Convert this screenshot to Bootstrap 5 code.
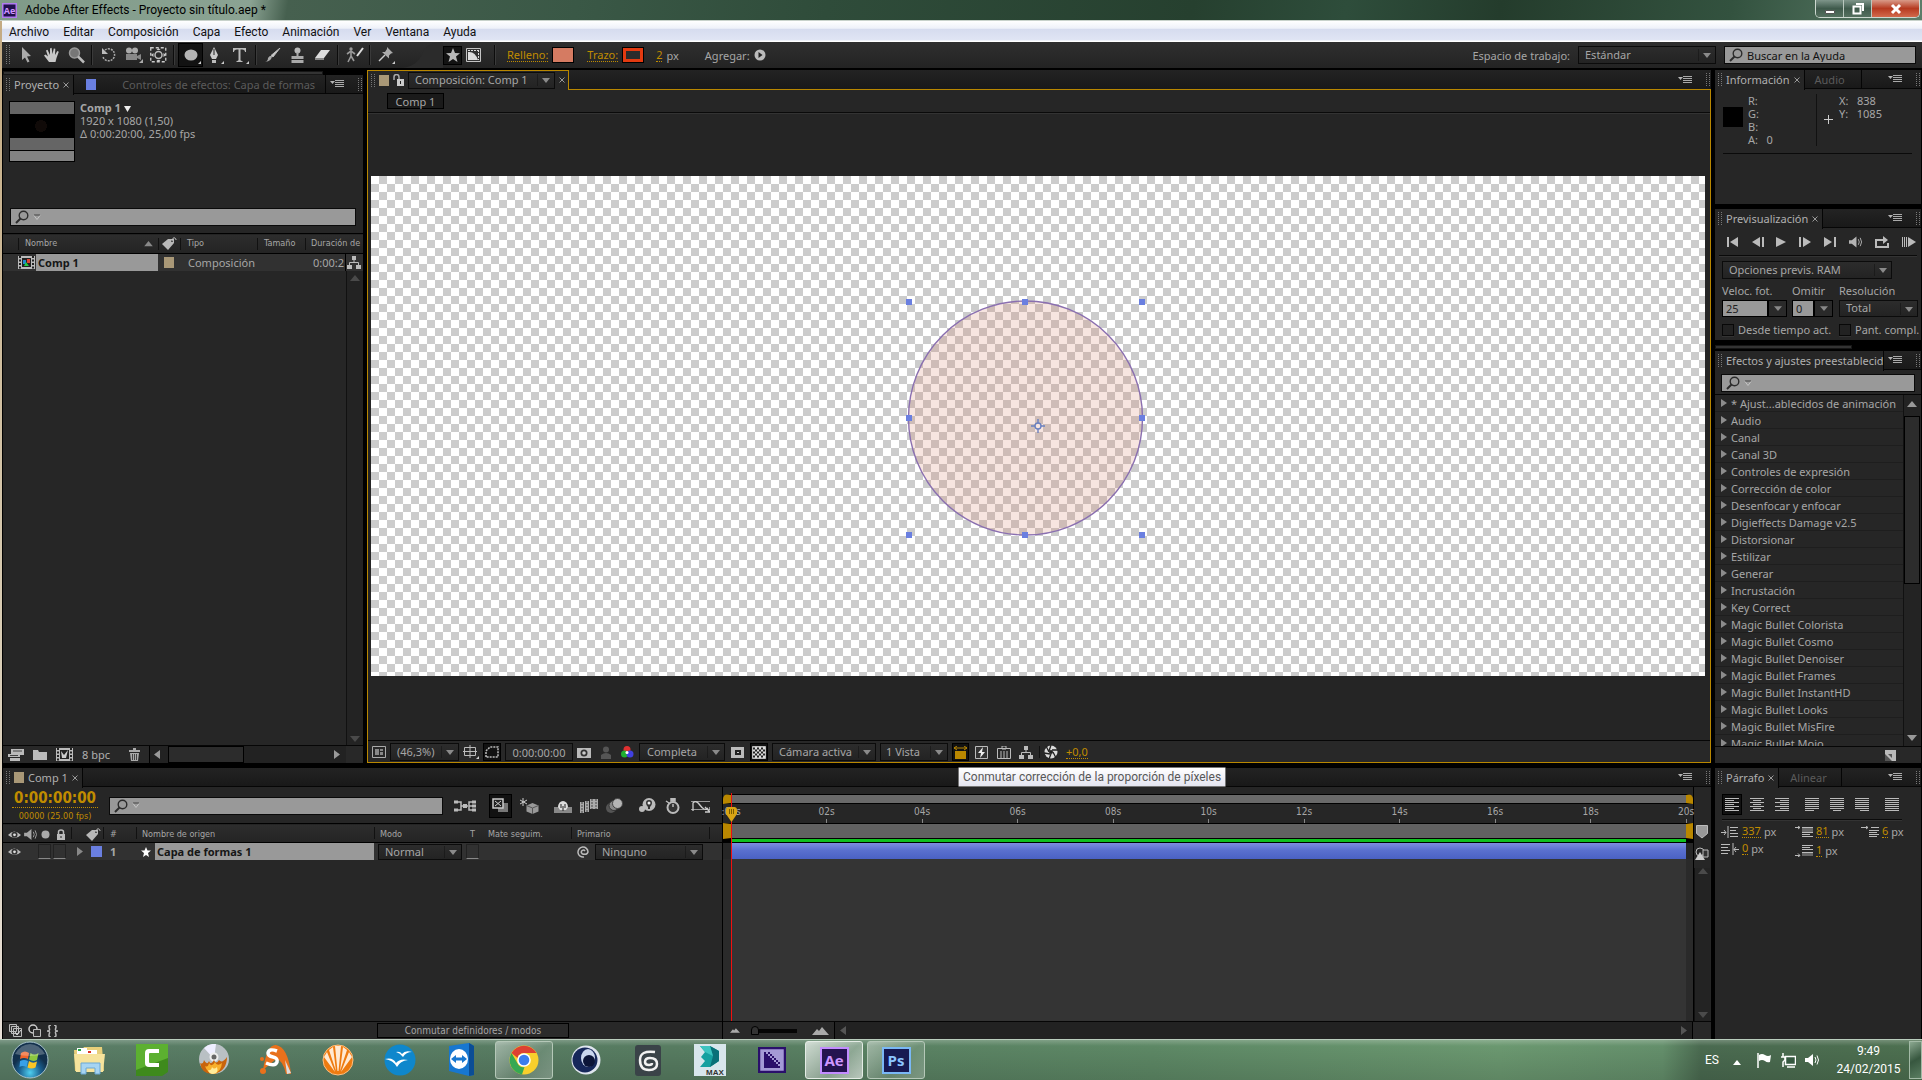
<!DOCTYPE html>
<html lang="es">
<head>
<meta charset="utf-8">
<meta name="viewport" content="width=device-width, initial-scale=1">
<title>Adobe After Effects - Proyecto sin título.aep *</title>
<link href="https://cdn.jsdelivr.net/npm/bootstrap@5.3.0/dist/css/bootstrap.min.css" rel="stylesheet">
<style>
:root{--ink:#a6a6a6;--pane:#262626;--gold:#c08c00;--field:#999}
body{height:100vh;overflow:hidden;background:#000;color:var(--ink);font:11px/13px "Noto Sans","Open Sans",sans-serif}
svg{display:block;flex:none}
button,input,select{font:inherit;color:inherit}
.ib{background:none;border:0;padding:0;display:inline-flex;align-items:center;justify-content:center;flex:none;color:#b4b4b4}
.ib.pressed{background:#121212;box-shadow:inset 0 0 0 1px #000}
.tiny{font:9px/13px "DejaVu Sans Condensed","DejaVu Sans",sans-serif}
/* window frame */
.titlebar{height:21px;background:linear-gradient(100deg,#7f9a88 0,#8ba393 13%,#46604f 15%,#3a5846 30%,#2f4c3a 43%,#26402f 62%,#2e4d3b 70%,#243c2c 78%,#33523f 90%,#5c7d69 100%);border-bottom:1px solid #c8d2cb;color:#000;font:12px/18px Roboto,sans-serif;padding-left:2px}
.wbtns{height:18px;border:1px solid #cdd8d0;border-top:0;border-radius:0 0 5px 5px;overflow:hidden;margin-right:2px}
.wbtns button{height:17px;width:28px;background:linear-gradient(#7e958a,#3f5a4c 50%,#55705f);border-right:1px solid #b9c7be}
.wbtns button:last-child{width:47px;background:linear-gradient(#d99a88,#b63a20 50%,#d2694c);border:0}
.frame{padding-left:2px;min-height:0;background:linear-gradient(#c4ab83,#d8ccb4 60%,#e8e0d8)}
.menubar{height:21px;background:linear-gradient(#fff 0,#eef1f9 35%,#d6dcef 38%,#e0e5f4 90%,#fff 96%);color:#111;font:12px/18px Roboto,sans-serif;padding-left:7px;gap:14px}
.menubar a{color:inherit;text-decoration:none}
.tools{height:26px;background:linear-gradient(#2f2f2f,#232323);padding-right:6px}
.tools .ib{width:25px;height:24px}
.tools .ib.small-b{width:19px;height:19px}
.vsep{width:7px;height:20px;flex:none;background:linear-gradient(90deg,transparent 2px,#0c0c0c 2px,#0c0c0c 3px,#3a3a3a 3px,#3a3a3a 4px,transparent 4px)}
.vline{width:1px;flex:none;align-self:stretch;background:#111;margin:4px 0}
.grip{width:4px;height:13px;flex:none;background:repeating-linear-gradient(#777 0 1px,transparent 1px 2px);-webkit-mask:linear-gradient(90deg,#000 1px,transparent 1px 3px,#000 3px);mask:linear-gradient(90deg,#000 1px,transparent 1px 3px,#000 3px)}
.gold{color:var(--gold);border-bottom:1px dotted var(--gold);text-decoration:none;line-height:12px}
.gold:hover{color:var(--gold)}
.clock{font:700 15px/17px "DejaVu Sans Condensed","DejaVu Sans",sans-serif;display:block}
.swatch{width:22px;height:16px;border:1px solid #000;background:#d57b62;flex:none}
.swatch.line{background:#2c2c2c;border:0;box-shadow:inset 0 0 0 1px #000,inset 0 0 0 4px #e43a10}
/* fields */
.sel{appearance:none;border:1px solid #0b0b0b;border-radius:0;height:18px;line-height:14px;padding:0 18px 1px 6px;color:var(--ink);background:url("data:image/svg+xml,%3Csvg xmlns='http://www.w3.org/2000/svg' width='17' height='14'%3E%3Cpath d='M0 1v12' stroke='%23101010'/%3E%3Cpath d='M5 5h8l-4 5z' fill='%238a8a8a'/%3E%3C/svg%3E") right center no-repeat,linear-gradient(#2c2c2c,#232323);flex:none}
.find{background:var(--field);border:1px solid #0a0a0a;height:18px;color:#222;flex:none}
.find input{background:none;border:0;outline:0;padding:0;min-width:0;flex:1;color:#111}
.find input::placeholder{color:#111;opacity:1}
.num{background:var(--field);border:1px solid #000;height:17px;padding:0 3px;color:#222}
.drop{width:19px;height:17px;background:#2a2a2a;border:1px solid #000}
.tick{appearance:none;width:12px;height:12px;margin:0 4px 0 0;background:#222;border:1px solid #080808;box-shadow:0 1px #333}
/* panels */
.pane{background:var(--pane);display:flex;flex-direction:column;min-width:0;min-height:0;position:relative}
.ptabs{height:19px;flex:none;display:flex;background:linear-gradient(#232323,#191919);border-bottom:1px solid #060606}
.ptab{height:20px;display:flex;align-items:center;background:var(--pane);border:0;border-right:1px solid #050505;padding:0 4px 1px 3px;gap:4px;white-space:nowrap;overflow:hidden;color:#b0b0b0}
.ptab.off{background:none;color:#5b5b5b;height:19px;padding-bottom:0}
.pend{width:37px;display:flex;align-items:center;margin-left:auto;flex:none}
.pend .ib{width:22px}
.pend .grip{margin-left:10px}
.strip{height:4px;background:#333;border:1px solid #161616;flex:none}
.chip{width:10px;height:11px;background:#a99877;flex:none}
.chip.blue{background:#6a7fe0}
.hr1{height:2px;background:#0a0a0a;border-bottom:1px solid #333;flex:none}
.left{width:360px}
.right{width:206px}
.thumb{width:66px;height:61px;flex:none;border:1px solid #000;background:radial-gradient(circle at 31px 24px,#100a08 6px,transparent 6px),linear-gradient(#656565 12px,#000 12px 36px,#656565 36px 48px,#000 48px 49px,#828282 49px)}
.grid-t{table-layout:fixed;border-collapse:collapse;width:100%;color:inherit}
.grid-t th,.grid-t td{padding:0;font-weight:400;white-space:nowrap;overflow:hidden;vertical-align:middle}
.grid-t thead tr{height:20px;background:linear-gradient(#2d2d2d,#242424);border-top:1px solid #000;border-bottom:1px solid #000}
.layers thead tr{height:19px}
.layers thead th{padding-top:3px}
.grid-t thead th.b{background:linear-gradient(#111,#111) left center/1px 12px no-repeat;padding-left:7px}
.grid-t tbody tr{height:17px;background:#313131}
.picked{background:var(--field);color:#161616;font-weight:700;line-height:17px;padding-left:2px}
.slotbox{width:13px;height:15px;border:1px solid #222;border-bottom-color:#888}
.sbar{width:17px;background:#232323;border-left:1px solid #111;display:flex;flex-direction:column;align-items:center;justify-content:space-between;flex:none;color:#4a4a4a;padding:2px 0}
.foot{height:22px;flex:none;display:flex;align-items:center;background:#282828;border-top:1px solid #060606;color:#b0b0b0}
/* composition viewer */
.viewer{border:1px solid #b98700;border-top:0}
.viewer>.ptabs{border-bottom:1px solid #b98700;height:20px;margin:0 -1px;padding-left:1px}
.viewer .ptab{border:1px solid #b98700;border-bottom:0;width:202px;margin-left:-1px;height:20px}
.stage{padding:62px 5px 64px 3px;background:#252525}
.viewer>.foot{padding:1px 0 0 4px;gap:4px}
.checker{background:conic-gradient(#ccc 25%,#fff 0 50%,#ccc 0 75%,#fff 0) 0 0/16px 16px;position:relative}
.shape{position:absolute;left:50%;top:50%;margin:-140px 0 0 -150px}
.hint{position:absolute;left:956px;top:4px;height:20px;padding:2px 4px;background:linear-gradient(#fff,#e4e5f0);border:1px solid #767676;color:#575757;white-space:nowrap;z-index:5;border-radius:1px;font:12px/15px Roboto,sans-serif}
/* effects list */
.fx{list-style:none;margin:0;padding:0;overflow:hidden;flex:1 1 0;min-height:0}
.fx li{height:17px;display:flex;align-items:center;gap:4px;padding-left:6px;border-bottom:1px solid #1e1e1e;white-space:nowrap}
.fx li::before{content:"";border-left:6px solid #8c8c8c;border-top:4px solid transparent;border-bottom:4px solid transparent}
/* timeline */
.tl-left{width:720px;border-right:1px solid #000}
.nav-track{height:10px;background:#696969;border:1px solid #000;border-radius:5px 5px 0 0;border-left:8px solid #b98700;border-right:7px solid #b98700}
.ruler{height:19px;padding:1px 7px 0 8px;font:10px/14px "DejaVu Sans Condensed",sans-serif}
.ruler span{width:0;display:flex;flex-direction:column;align-items:center;white-space:nowrap;justify-content:space-between}
.ruler span::after{content:"";height:4px;width:1px;background:#888}
.work{height:16px;background:#616161;border:1px solid #000;border-left:8px solid #b98700;border-right:7px solid #b98700}
.lane{padding:0 7px 0 8px}
.cache{height:3px;background:#10c020}
.bar{height:16px;background:linear-gradient(#7d8ee0,#5a70cf 45%,#4a61c4)}
.playhead{position:absolute;left:2px;top:18px;bottom:0;width:14px}
.playhead::after{content:"";position:absolute;left:6px;top:-12px;bottom:0;width:1px;background:#f01010}
.playhead svg{position:relative;z-index:1}
.zoomer{appearance:none;width:46px;height:10px;background:linear-gradient(transparent 3px,#050505 3px 7px,transparent 7px);margin:0 11px}
.zoomer::-webkit-slider-thumb{appearance:none;width:8px;height:9px;background:#333;border:1px solid #000;border-radius:4px 4px 0 0}
/* paragraph */
.al{padding:7px 0 0 7px}
.al .ib{width:20px;height:21px}
.para{display:grid;grid-template-columns:74px 66px 60px;padding-left:6px}
.para>div{display:flex;align-items:center;gap:3px;height:17px;white-space:nowrap}
/* taskbar */
.taskbar{height:41px;flex:none;background:linear-gradient(rgba(255,255,255,.22),transparent 15%,rgba(0,0,0,.12)),linear-gradient(90deg,#5a7d66 0,#577c61 35%,#5d8865 60%,#6b9870 78%,#648f6b 86.5%,#4a6a50 88.5%,#4d7050 100%);border-top:1px solid #b9cdbd;color:#fff;font:12px/18px Roboto,sans-serif}
.slot{width:62px;height:40px}
.slot>span{width:58px;height:38px;display:flex;align-items:center;justify-content:center;border-radius:3px;border:1px solid transparent}
.slot.open>span{border-color:#b5c8b8;background:linear-gradient(135deg,rgba(255,255,255,.42),rgba(255,255,255,.12) 60%,rgba(255,255,255,.25))}
.slot.front>span{border-color:#e4ece5;background:linear-gradient(135deg,rgba(255,255,255,.7),rgba(255,255,255,.32) 60%,rgba(255,255,255,.6))}
.appsq{width:29px;height:27px;border:2px solid #c38dff;background:#25134f;color:#cf96ff;font:700 15px/23px "Open Sans",sans-serif;text-align:center}
.appsq.ps{border-color:#7ab8f5;background:#171a52;color:#8bc5ff}
.peek{width:13px;height:38px;border:1px solid #a3baa6;background:linear-gradient(150deg,#8ba890,#37573f 50%,#5a7d61)}
</style>
</head>
<body class="d-flex flex-column">

<svg width="0" height="0" class="position-absolute" aria-hidden="true">
<defs>
<symbol id="menu" viewBox="0 0 14 10"><path d="M0 2h5l-2.500 3z" fill="#b5b5b5"/><path d="M5 1.500h9M5 3.500h9M5 5.500h9M5 7.500h9" stroke="#aaa"/></symbol>
<symbol id="x" viewBox="0 0 6 6"><path d="M.5.5l5 5M5.500.5l-5 5" stroke="#999" fill="none"/></symbol>
<symbol id="loupe" viewBox="0 0 14 14"><circle cx="8.500" cy="5.500" r="4.300" fill="none" stroke="#2c2c2c" stroke-width="1.400"/><path d="M5.500 8.500L1 13" stroke="#2c2c2c" stroke-width="2"/></symbol>
<symbol id="hist" viewBox="0 0 8 7"><path d="M1 1h6" stroke="#444"/><path d="M1 1.500l3 4 3-4" stroke="#c4c4c4" fill="none"/></symbol>
<symbol id="up" viewBox="0 0 10 7"><path d="M0 6l5-6 5 6z" fill="currentColor"/></symbol>
<symbol id="down" viewBox="0 0 10 7"><path d="M0 0h10L5 6z" fill="currentColor"/></symbol>
<symbol id="lt" viewBox="0 0 6 9"><path d="M6 0v9L0 4.500z" fill="currentColor"/></symbol>
<symbol id="rt" viewBox="0 0 6 9"><path d="M0 0v9l6-4.500z" fill="currentColor"/></symbol>
<symbol id="tag" viewBox="0 0 15 13"><path d="M0 7l6-5 6 0 0 4-6 7z" fill="#b8b8b8"/><circle cx="10" cy="4" r="1" fill="#333"/><path d="M10 4c0-4 4-4 4-1" stroke="#ccc" fill="none"/></symbol>
<symbol id="tree" viewBox="0 0 14 13"><path d="M5 0h4v4H5zM0 9h5v4H0zM9 9h5v4H9z" fill="#bbb"/><path d="M7 4v3M2.500 9V6.500h9V9" stroke="#bbb" fill="none"/></symbol>
<symbol id="eye" viewBox="0 0 13 10"><path d="M0 5q6-7 13 0-6 6-13 0z" fill="#bcbcbc"/><circle cx="6.500" cy="4.800" r="3" fill="#333"/><circle cx="6.500" cy="4.800" r="1.400" fill="#ddd"/></symbol>
<symbol id="film" viewBox="0 0 17 13"><path d="M0 0h17v13H0z" fill="#bbb"/><path d="M4 2h9v9H4z" fill="#222"/><path d="M2 0v13M15 0v13" stroke="#222" stroke-width="2" stroke-dasharray="2 1.500"/></symbol>
<symbol id="spk" viewBox="0 0 15 12"><path d="M0 4h3l5-4v12L3 8H0z" fill="currentColor"/><path d="M10 3q2 3 0 6M12 1.500q3 4.500 0 9" stroke="currentColor" fill="none"/></symbol>
<symbol id="mtn" viewBox="0 0 17 8"><path d="M0 8l5-6 2 2 3-4 7 8z" fill="#aaa"/></symbol>
</defs>
</svg>

<header class="titlebar d-flex align-items-center flex-shrink-0">
  <svg width="15" height="15"><path fill="#21104d" stroke="#b07cf0" stroke-width="1.500" d="M.75.75h13.500v13.500H.75z"/><text x="7.500" y="11" font-family="Open Sans" font-weight="700" font-size="9" fill="#cf96ff" text-anchor="middle">Ae</text></svg>
  <span class="ms-1 ps-1 flex-grow-1">Adobe After Effects - Proyecto sin título.aep *</span>
  <div class="wbtns d-flex align-self-start">
    <button class="ib" aria-label="Minimizar"><svg width="12" height="12"><path d="M1.500 7.500h9v3h-9z" fill="#fff" stroke="#555"/></svg></button>
    <button class="ib" aria-label="Restaurar"><svg width="12" height="12"><path d="M4 1h7v7M1.500 3.500h7v7h-7z" fill="none" stroke="#fff" stroke-width="2"/></svg></button>
    <button class="ib" aria-label="Cerrar"><svg width="12" height="12"><path d="M2 2l8 8M10 2l-8 8" stroke="#fff" stroke-width="3"/></svg></button>
  </div>
</header>

<div class="frame d-flex flex-column flex-grow-1">
<nav class="menubar d-flex align-items-center flex-shrink-0">
  <a href="#">Archivo</a><a href="#">Editar</a><a href="#">Composición</a><a href="#">Capa</a><a href="#">Efecto</a><a href="#">Animación</a><a href="#">Ver</a><a href="#">Ventana</a><a href="#">Ayuda</a>
</nav>

<div class="tools d-flex align-items-center flex-shrink-0">
  <span class="grip mx-1" style="height:20px"></span>
  <button class="ib" aria-label="Selección"><svg width="12" height="16"><path d="M1 0l9 9-4 .5 2.500 5-2 1L4 10.500 1 13z" fill="#aaa"/></svg></button>
  <button class="ib" aria-label="Mano"><svg width="16" height="16"><path d="M5 15L0 8.500l1.500-1L4 9.500 2 3.500l1.500-.8L6 8V1.500l1.600-.8L8.500 7l1.300-5.500 1.500.2L11 8l2.300-4 1.500.7L12.500 11 11.500 15z" fill="#c8c8c8"/></svg></button>
  <button class="ib" aria-label="Zoom"><svg width="17" height="17"><circle cx="6.500" cy="6" r="5" fill="#777" stroke="#999" stroke-width="1.500"/><path d="M10 9.500l6 6" stroke="#bbb" stroke-width="2.500"/></svg></button>
  <span class="vsep"></span>
  <button class="ib" aria-label="Rotación"><svg width="16" height="16"><path d="M4 3a6 6 0 1 1-2 7" fill="none" stroke="#aaa" stroke-width="1.500" stroke-dasharray="2 1"/><path d="M1 1v6h6z" fill="#bbb"/></svg></button>
  <button class="ib" aria-label="Cámara"><svg width="18" height="16"><circle cx="4" cy="3.500" r="3" fill="#aaa"/><circle cx="10" cy="3.500" r="3" fill="#aaa"/><path d="M1 7h11v6H1zM12 9l4-2v6l-4-2z" fill="#888"/><path d="M18 16v-4l-4 4z" fill="#aaa"/></svg></button>
  <button class="ib" aria-label="Panorámica"><svg width="17" height="16"><path d="M.75.75h15v14H.75z" fill="none" stroke="#ccc" stroke-width="1.300" stroke-dasharray="3 2"/><circle cx="8.500" cy="8" r="3.500" fill="none" stroke="#bbb" stroke-width="1.500"/><path d="M8.500 1l2 2h-4zM8.500 15l2-2h-4zM1 8l2.500-2v4zM16 8l-2.500-2v4z" fill="#ccc"/></svg></button>
  <span class="vsep"></span>
  <button class="ib pressed" aria-label="Elipse"><svg width="22" height="20"><ellipse cx="11" cy="10" rx="6.500" ry="5.500" fill="#b5b5b5"/><path d="M21 19v-3l-3 3z" fill="#ccc"/></svg></button>
  <button class="ib" aria-label="Pluma"><svg width="18" height="17"><path d="M7 0l4 8-2 4H5L3 8z" fill="#ccc"/><path d="M7 2v6" stroke="#222"/><path d="M5 13h4v3H5z" fill="#bbb"/><path d="M17 17v-3l-3 3z" fill="#ccc"/></svg></button>
  <button class="ib" aria-label="Texto"><svg width="18" height="17"><path d="M1 1h13v4h-1q0-2.500-3-2.500H8.500V13q0 1 2 1v1H4.500v-1q2 0 2-1V2.500H5Q2 2.500 2 5H1z" fill="#bbb"/><path d="M17 17v-3l-3 3z" fill="#ccc"/></svg></button>
  <span class="vsep"></span>
  <button class="ib" aria-label="Pincel"><svg width="16" height="15"><path d="M15 0L8 9 6 7.500z" fill="#ccc" stroke="#bbb"/><path d="M7 8q0 5-7 6 3-1 3-4 2-3 4-2z" fill="#aaa"/></svg></button>
  <button class="ib" aria-label="Tampón de clonar"><svg width="15" height="16"><circle cx="7.500" cy="3.500" r="3" fill="#bbb"/><path d="M6.500 5h2v4h5v3h-12V9h5zM1.500 13h12v3h-12z" fill="#aaa"/></svg></button>
  <button class="ib" aria-label="Borrador"><svg width="17" height="12"><path d="M7 1h9l-6 8H1z" fill="#ddd"/><path d="M1 9h9v2H1z" fill="#888"/></svg></button>
  <span class="vsep"></span>
  <button class="ib" aria-label="Pincel de rotoscopia"><svg width="18" height="16"><circle cx="5" cy="2" r="1.700" fill="#999"/><path d="M5 4v5l-3 6M5 9l3 5M1 7l4-3 4 3" stroke="#999" stroke-width="1.600" fill="none"/><path d="M17 1l-6 8" stroke="#ddd" stroke-width="2"/></svg></button>
  <span class="vsep"></span>
  <button class="ib" aria-label="Posición libre"><svg width="18" height="17"><path d="M9 0l6 6-2 .5-2 2 0 3L4 5l3 0 2-3z" fill="#aaa"/><path d="M7 8l-6 6" stroke="#ccc" stroke-width="1.500"/><path d="M17 17v-3l-3 3z" fill="#ccc"/></svg></button>
  <svg width="44" height="26"><path d="M0 26Q18 26 24 10 28 0 44 0V26z" fill="#2b2b2b"/></svg>
  <button class="ib pressed small-b" aria-label="Crear forma"><svg width="14" height="14"><path d="M7 0l2 5 5 .3-4 3.300L11.500 14 7 11l-4.500 3L4 8.600 0 5.300 5 5z" fill="#b8b8b8"/></svg></button>
  <button class="ib small-b" style="width:22px" aria-label="Crear máscara"><svg width="15" height="14"><path d="M.5.5h14v13H.5z" fill="#333" stroke="#c4c4c4"/><path d="M2 2.500h11M12.500 2v10" stroke="#ddd" stroke-dasharray="2 1"/><path d="M2 12V4q7-1 10 8z" fill="#ddd"/></svg></button>
  <span class="vsep mx-2"></span>
  <a href="#" class="gold">Relleno:</a><span class="swatch ms-1"></span>
  <a href="#" class="gold" style="margin-left:13px">Trazo:</a><span class="swatch line ms-1"></span>
  <a href="#" class="gold" style="margin-left:12px">2</a><span class="ps-1">px</span>
  <span style="margin-left:26px">Agregar:</span>
  <button class="ib me-auto" style="width:20px" aria-label="Agregar"><svg width="12" height="12"><circle cx="6" cy="6" r="5.500" fill="#bbb"/><path d="M4.500 3v6L8.500 6z" fill="#222"/></svg></button>
  <label for="wsp" class="me-2">Espacio de trabajo:</label>
  <select id="wsp" class="sel" style="width:138px"><option>Estándar</option></select>
  <div class="find d-flex align-items-center ms-2" style="width:192px"><svg width="14" height="14" class="mx-1"><use href="#loupe"/></svg><input aria-label="Ayuda" placeholder="Buscar en la Ayuda"></div>
</div>

<main class="d-flex flex-column flex-grow-1 bg-black" style="min-height:0">
<div class="d-flex flex-grow-1" style="min-height:0;padding:2px 1px 0 1px;gap:4px">

  <section class="left d-flex flex-column flex-shrink-0">
    <div class="strip" style="width:320px;margin-top:1px"></div>
    <div class="pane flex-grow-1">
      <div class="ptabs"><button class="ptab"><span class="grip"></span>Proyecto<svg width="6" height="6"><use href="#x"/></svg></button>
        <button class="ptab off flex-grow-1" style="width:0;padding-left:12px"><span class="chip blue" style="margin-right:22px"></span>Controles de efectos: Capa de formas</button>
        <div class="pend"><button class="ib" aria-label="Menú"><svg width="14" height="10"><use href="#menu"/></svg></button><span class="grip"></span></div></div>
      <div class="d-flex flex-shrink-0" style="height:114px;padding:7px 6px">
        <div class="thumb"></div>
        <div style="padding-left:5px"><strong>Comp 1</strong> <svg width="7" height="6" class="d-inline"><path d="M0 0h7L3.500 6z" fill="#eee"/></svg><br>1920 x 1080 (1,50)<br>Δ 0:00:20:00, 25,00 fps</div>
      </div>
      <div class="find d-flex align-items-center" style="margin:0 7px 7px"><svg width="14" height="14" class="mx-1"><use href="#loupe"/></svg><svg width="8" height="7"><use href="#hist"/></svg><input aria-label="Buscar en el proyecto"></div>
      <table class="grid-t flex-shrink-0">
        <colgroup><col style="width:15px"><col style="width:18px"><col style="width:122px"><col style="width:22px"><col style="width:77px"><col style="width:48px"><col style="width:40px"><col></colgroup>
        <thead class="tiny"><tr><th></th><th class="b" colspan="2"><div class="d-flex align-items-center justify-content-between pe-1">Nombre<svg width="11" height="6" color="#888"><use href="#up"/></svg></div></th><th class="b"><svg width="15" height="13" style="margin-left:-3px"><use href="#tag"/></svg></th><th class="b">Tipo</th><th class="b">Tamaño</th><th class="b" colspan="2" style="padding-left:6px">Duración de</th></tr></thead>
        <tbody><tr><td></td><td><svg width="17" height="13"><use href="#film"/><path d="M5 4h3v4H5z" fill="#28c"/><path d="M9 3h3v4H9z" fill="#d43"/><path d="M6 10l2-4 3 4z" fill="#2c4"/></svg></td><td><div class="picked">Comp 1</div></td><td><div class="chip mx-auto"></div></td><td class="ps-2">Composición</td><td></td><td class="ps-2">0:00:2</td><td style="border-left:1px solid #000"><svg width="14" height="13" class="mx-auto"><use href="#tree"/></svg></td></tr></tbody>
      </table>
      <div class="d-flex flex-grow-1" style="min-height:0"><div class="flex-grow-1"></div><div class="sbar pt-1"><svg width="10" height="7"><use href="#up"/></svg><svg width="10" height="7"><use href="#down"/></svg></div></div>
      <div class="foot" style="height:18px;gap:9px;padding-left:5px">
        <svg width="16" height="12"><path d="M3 0h13v6H3zM0 5h12v3H0zM2 9h10v3H2z" fill="#bbb"/><path d="M5 2h9M2 6.500h8" stroke="#444"/></svg>
        <svg width="14" height="11"><path d="M0 1h5l1 2h8v8H0z" fill="#bbb"/></svg>
        <svg width="17" height="13"><use href="#film"/><path d="M5 3l3 4 4-5-2 8H6z" fill="#ccc"/></svg>
        <span>8 bpc</span>
        <svg width="11" height="13" style="margin-left:10px"><path d="M0 2h11v2H0zM4 0h3v2H4zM1 5h9l-1 8H2z" fill="#aaa"/><path d="M3.500 6v6M5.500 6v6M7.500 6v6" stroke="#444"/></svg>
        <div class="d-flex align-items-center flex-grow-1 h-100" style="background:#222;border-left:1px solid #000;padding:0 6px 0 4px;margin-right:17px"><svg width="6" height="9" color="#999"><use href="#lt"/></svg><div class="ms-2 me-auto h-100" style="width:76px;background:#2c2c2c;border:1px solid #000"></div><svg width="6" height="9" color="#999"><use href="#rt"/></svg></div>
      </div>
    </div>
  </section>

  <section class="pane viewer flex-grow-1">
    <div class="ptabs"><div class="ptab"><span class="grip"></span><span class="chip"></span>
      <svg width="11" height="13"><path d="M1 6V3a2 2 0 0 1 5 0v3" stroke="#aaa" stroke-width="1.500" fill="none"/><path d="M4 5h7v7H4z" fill="#ccc"/><path d="M7.500 7v3" stroke="#222"/></svg>
      <select class="sel" style="width:147px;height:17px" aria-label="Composición"><option>Composición: Comp 1</option></select><svg width="6" height="6"><use href="#x"/></svg></div>
      <div class="pend"><button class="ib" aria-label="Menú"><svg width="14" height="10"><use href="#menu"/></svg></button><span class="grip"></span></div></div>
    <div class="d-flex align-items-center flex-shrink-0" style="height:22px;padding-left:19px"><button class="ib" style="width:57px;height:16px;background:#1a1a1a;border:1px solid #000;color:var(--ink)">Comp 1</button></div>
    <div class="hr1"></div>
    <div class="stage d-flex flex-grow-1">
      <div class="checker flex-grow-1">
        <svg class="shape" width="280" height="280" viewBox="0 0 280 280">
          <circle cx="137.500" cy="132" r="117" fill="#d57b62" fill-opacity=".2" stroke="#8a6fb0" stroke-width="1.400"/>
          <g fill="#6a7fe0"><path d="M18 13h6v6h-6zM134 13h6v6h-6zM251 13h6v6h-6zM18 129h6v6h-6zM251 129h6v6h-6zM18 246h6v6h-6zM134 246h6v6h-6zM251 246h6v6h-6z"/></g>
          <g fill="none" stroke="#6a80c0" stroke-width="1.400"><circle cx="150" cy="140" r="3"/><path d="M150 133v4M150 143v4M143 140h4M153 140h4"/></g>
        </svg>
      </div>
    </div>
    <div class="foot">
      <button class="ib" aria-label="Previsualizar siempre"><svg width="14" height="12"><path d="M.5.5h13v11H.5z" fill="none" stroke="#aaa"/><path d="M3 3h4v6H3zM8 3h3v2H8zM8 6h3v3H8z" fill="#888"/></svg></button>
      <select class="sel" style="width:69px;padding-left:6px" aria-label="Ampliación"><option>(46,3%)</option></select>
      <button class="ib" aria-label="Guías"><svg width="16" height="14"><path d="M1.500 2.500h11v8h-11zM7 0v13M0 6.500h14" fill="none" stroke="#bbb"/><path d="M16 14v-3l-3 3z" fill="#ccc"/></svg></button>
      <button class="ib pressed" style="width:18px;height:18px" aria-label="Máscaras"><svg width="14" height="12"><path d="M1 11V5l4-4h8v10z" fill="none" stroke="#bbb" stroke-width="1.500" stroke-dasharray="2 1"/></svg></button>
      <button class="ib" style="width:68px;height:18px;border:1px solid #0b0b0b;color:var(--ink)">0:00:00:00</button>
      <button class="ib" aria-label="Instantánea"><svg width="14" height="11"><path d="M0 1h14v10H0z" fill="#bbb"/><circle cx="7" cy="6" r="3.500" fill="#333"/><circle cx="7" cy="6" r="1.800" fill="#ccc"/></svg></button>
      <svg width="20" height="13"><circle cx="11" cy="3.500" r="3" fill="#555"/><path d="M6 13V9q5-4 10 0v4z" fill="#555"/></svg>
      <svg width="16" height="14"><circle cx="8" cy="4.500" r="3.500" fill="#e03030"/><circle cx="5.500" cy="9" r="3.500" fill="#20b030"/><circle cx="11" cy="9" r="3.500" fill="#4040e0"/><circle cx="8" cy="7.500" r="1.500" fill="#fff"/></svg>
      <select class="sel" style="width:86px;padding-left:7px" aria-label="Resolución de vista"><option>Completa</option></select>
      <button class="ib" style="width:17px" aria-label="Región"><svg width="13" height="11"><path d="M0 0h13v11H0z" fill="#bbb"/><path d="M4 3h6v5H4z" fill="#222"/><path d="M6 5h2v1H6z" fill="#ccc"/></svg></button>
      <button class="ib pressed" style="width:18px;height:18px" aria-label="Transparencia"><svg width="14" height="13"><path d="M.5.5h13v12H.5z" fill="#ddd" stroke="#bbb"/><path d="M1 2.500h12M1 6.500h12M1 10.500h12" stroke="#222" stroke-width="2" stroke-dasharray="2"/><path d="M3 4.500h10M3 8.500h10" stroke="#222" stroke-width="2" stroke-dasharray="2"/></svg></button>
      <select class="sel" style="width:104px" aria-label="Vista 3D"><option>Cámara activa</option></select>
      <select class="sel" style="width:68px;padding-left:5px" aria-label="Diseño de vista"><option>1 Vista</option></select>
      <button class="ib pressed" style="width:17px;height:18px" aria-label="Proporción de píxeles"><svg width="13" height="13"><path d="M1 5h11v8H1z" fill="#b98700"/><path d="M0 2h13M3 0L0 2l3 2M10 0l3 2-3 2" stroke="#b98700" fill="none"/></svg></button>
      <button class="ib" style="width:18px" aria-label="Previsualización rápida"><svg width="15" height="13"><path d="M.5.5h12v12H.5z" fill="#333" stroke="#bbb"/><path d="M8 1L3 7h3l-1 5 5-6H7z" fill="#eee"/></svg></button>
      <button class="ib" style="width:18px" aria-label="Línea de tiempo"><svg width="14" height="13"><path d="M.5 2.500h13v10H.5zM4 5v7M7 5v7M10 5v7M5 0h4v3H5z" fill="none" stroke="#bbb"/></svg></button>
      <button class="ib" style="width:18px" aria-label="Diagrama de flujo"><svg width="14" height="13"><use href="#tree"/></svg></button>
      <span class="vline mx-0"></span>
      <button class="ib" aria-label="Exposición"><svg width="14" height="14"><circle cx="7" cy="7" r="6.500" fill="#ddd"/><path d="M7 0l-2 6M14 5L8 5M12 13L9 7M5 14l2-5M0 8l6 1M2 1l3 6" stroke="#222" stroke-width="1.300"/><circle cx="7" cy="7" r="2" fill="#222"/></svg></button>
      <a href="#" class="gold ms-1">+0,0</a>
    </div>
  </section>

  <section class="right d-flex flex-column flex-shrink-0" style="gap:5px">
    <div class="pane flex-shrink-0" style="height:134px">
      <div class="ptabs"><button class="ptab"><span class="grip"></span>Información<svg width="6" height="6"><use href="#x"/></svg></button><button class="ptab off" style="width:57px;padding-left:10px">Audio</button><div class="pend"><button class="ib" aria-label="Menú"><svg width="14" height="10"><use href="#menu"/></svg></button><span class="grip"></span></div></div>
      <div class="d-flex" style="margin:5px 9px 0 8px;height:60px;border-bottom:1px solid #0a0a0a">
        <div class="bg-black align-self-start" style="width:20px;height:20px;margin-top:13px"></div>
        <div style="width:68px;margin-left:5px">R:<br>G:<br>B:<br>A: &nbsp; 0</div>
        <div class="vline m-0" style="height:52px"></div>
        <svg width="9" height="9" style="margin:21px 6px 0 7px"><path d="M4.500 0v9M0 4.500h9" stroke="#ccc"/></svg>
        <div>X: &nbsp; 838<br>Y: &nbsp; 1085</div>
      </div>
    </div>
    <div class="pane flex-shrink-0" style="height:131px">
      <div class="ptabs"><button class="ptab"><span class="grip"></span>Previsualización<svg width="6" height="6"><use href="#x"/></svg></button><div class="pend"><button class="ib" aria-label="Menú"><svg width="14" height="10"><use href="#menu"/></svg></button><span class="grip"></span></div></div>
      <div class="d-flex align-items-center justify-content-between" style="height:27px;padding:0 5px 0 12px">
        <button class="ib" aria-label="Primer fotograma"><svg width="12" height="10"><path d="M1 0v10" stroke="#bbb" stroke-width="2"/><path d="M11 0v10L3 5z" fill="#bbb"/></svg></button>
        <button class="ib" aria-label="Fotograma anterior"><svg width="12" height="10"><path d="M8 0v10L0 5zM10 0h2v10h-2z" fill="#bbb"/></svg></button>
        <button class="ib" aria-label="Reproducir"><svg width="10" height="10"><path d="M0 0v10l10-5z" fill="#bbb"/></svg></button>
        <button class="ib" aria-label="Fotograma siguiente"><svg width="12" height="10"><path d="M0 0h2v10H0zM4 0v10l8-5z" fill="#bbb"/></svg></button>
        <button class="ib" aria-label="Último fotograma"><svg width="12" height="10"><path d="M0 0v10l8-5zM10 0h2v10h-2z" fill="#bbb"/></svg></button>
        <button class="ib" aria-label="Silenciar"><svg width="14" height="12"><use href="#spk"/></svg></button>
        <button class="ib" aria-label="Bucle"><svg width="14" height="12"><path d="M4 4H1v7h12V7" stroke="#bbb" stroke-width="2" fill="none"/><path d="M4 3h4V0l5 4-5 4V5H4z" fill="#bbb"/></svg></button>
        <button class="ib" aria-label="Previsualización RAM"><svg width="14" height="10"><path d="M.5 0v10M2.500 0v10M4.500 0v10" stroke="#bbb"/><path d="M6 0v10l8-5z" fill="#bbb"/></svg></button>
      </div>
      <div class="hr1 mx-1"></div>
      <select class="sel" style="width:170px;margin:4px 7px 5px" aria-label="Opciones"><option>Opciones previs. RAM</option></select>
      <div class="d-flex" style="margin-left:7px">
        <div style="width:70px"><label for="fps" class="d-block" style="height:16px">Veloc. fot.</label><div class="d-flex"><input id="fps" class="num" style="width:46px" value="25"><button class="ib drop" aria-label="Lista"><svg width="8" height="6" color="#888"><use href="#down"/></svg></button></div></div>
        <div style="width:47px"><label for="skip" class="d-block" style="height:16px">Omitir</label><div class="d-flex"><input id="skip" class="num" style="width:22px" value="0"><button class="ib drop" aria-label="Lista"><svg width="8" height="6" color="#888"><use href="#down"/></svg></button></div></div>
        <div><label for="res" class="d-block" style="height:16px">Resolución</label><select id="res" class="sel" style="width:79px;height:17px"><option>Total</option></select></div>
      </div>
      <div class="d-flex" style="margin:6px 0 0 7px;white-space:nowrap"><label class="d-flex align-items-center" style="width:117px"><input type="checkbox" class="tick">Desde tiempo act.</label><label class="d-flex align-items-center"><input type="checkbox" class="tick">Pant. compl.</label></div>
    </div>
    <div class="d-flex flex-column flex-grow-1" style="min-height:0">
      <div class="strip" style="width:137px;margin-bottom:2px"></div>
      <div class="pane flex-grow-1">
        <div class="ptabs"><button class="ptab flex-grow-1" style="width:0;padding-right:0"><span class="grip"></span>Efectos y ajustes preestablecidos</button><div class="pend"><button class="ib" aria-label="Menú"><svg width="14" height="10"><use href="#menu"/></svg></button><span class="grip"></span></div></div>
        <div class="find d-flex align-items-center" style="margin:4px 6px 2px 6px"><svg width="14" height="14" class="mx-1"><use href="#loupe"/></svg><svg width="8" height="7"><use href="#hist"/></svg><input aria-label="Buscar efectos"></div>
        <div class="d-flex flex-grow-1" style="min-height:0;border-top:1px solid #060606">
          <ul class="fx align-self-stretch"><li>* Ajust...ablecidos de animación</li><li>Audio</li><li>Canal</li><li>Canal 3D</li><li>Controles de expresión</li><li>Corrección de color</li><li>Desenfocar y enfocar</li><li>Digieffects Damage v2.5</li><li>Distorsionar</li><li>Estilizar</li><li>Generar</li><li>Incrustación</li><li>Key Correct</li><li>Magic Bullet Colorista</li><li>Magic Bullet Cosmo</li><li>Magic Bullet Denoiser</li><li>Magic Bullet Frames</li><li>Magic Bullet InstantHD</li><li>Magic Bullet Looks</li><li>Magic Bullet MisFire</li><li>Magic Bullet Mojo</li></ul>
          <div class="sbar" style="color:#999;padding:6px 0 4px;margin-right:1px"><svg width="10" height="7"><use href="#up"/></svg><div class="w-100 mb-auto mt-2" style="height:168px;background:#2c2c2c;border:1px solid #000"></div><svg width="10" height="7"><use href="#down"/></svg></div>
        </div>
        <div class="foot justify-content-end" style="height:17px;padding-right:25px"><svg width="11" height="11"><path d="M0 0h11v11H0z" fill="#bbb"/><path d="M3 4h4v4M0 4l7 7H0z" fill="#555"/></svg></div>
      </div>
    </div>
  </section>
</div>

<div class="d-flex flex-shrink-0 position-relative" style="height:276px;padding:5px 1px 0 1px;gap:4px">
  <div class="hint" role="tooltip">Conmutar corrección de la proporción de píxeles</div>
  <section class="pane flex-grow-1">
    <div class="ptabs"><button class="ptab"><span class="grip"></span><span class="chip"></span>Comp 1<svg width="6" height="6"><use href="#x"/></svg></button><div class="pend"><button class="ib" aria-label="Menú"><svg width="14" height="10"><use href="#menu"/></svg></button><span class="grip"></span></div></div>
    <div class="d-flex flex-grow-1" style="min-height:0">
      <div class="tl-left d-flex flex-column flex-shrink-0">
        <div class="d-flex align-items-center flex-shrink-0" style="height:36px;padding:1px 12px 0 9px">
          <div class="text-center" style="width:86px;color:var(--gold);margin-right:11px"><a href="#" class="gold clock">0:00:00:00</a><span class="tiny" style="line-height:12px">00000 (25.00 fps)</span></div>
          <div class="find d-flex align-items-center flex-grow-1"><svg width="14" height="14" class="mx-1"><use href="#loupe"/></svg><svg width="8" height="7"><use href="#hist"/></svg><input aria-label="Buscar capas"></div>
          <div class="d-flex align-items-center justify-content-between" style="width:256px;margin-left:11px">
            <button class="ib" aria-label="Minidiagrama"><svg width="24" height="14"><path d="M1 3h6v8H1M7 7h7M20 3h-5v8h5M15 7h5" stroke="#bbb" fill="none" stroke-width="1.500"/><path d="M0 1.500h4v3H0zM0 9.500h4v3H0zM9 5h4v4H9zM18 1.500h4v3h-4zM18 5.500h4v3h-4zM18 9.500h4v3h-4z" fill="#bbb"/></svg></button>
            <button class="ib pressed ms-1" style="width:23px;height:24px" aria-label="Actualización en directo"><svg width="17" height="15"><path d="M6 5h10v9H6z" fill="#777"/><path d="M1 1h10v9H1z" fill="#222" stroke="#ccc" stroke-width="1.500"/><path d="M3 3l6 5M9 3L3 8" stroke="#ccc"/></svg></button>
            <button class="ib" aria-label="Borrador 3D"><svg width="19" height="16"><path d="M3 0v8M0 2l7 4M7 2L0 6" stroke="#ccc"/><path d="M12.500 5l6 2.500v6l-6 2.500-6-2.500v-6z" fill="#999"/><path d="M12.500 16v-6l6-2.500M12.500 10l-6-2.500" stroke="#555" fill="none"/></svg></button>
            <button class="ib ms-2" aria-label="Capas tímidas"><svg width="18" height="14"><path d="M0 8h18v6H0z" fill="#888"/><path d="M4 8a5 6 0 0 1 10 0l-2 3H6z" fill="#ddd"/><path d="M7 5v4M11 5v4M9 7v5" stroke="#222"/></svg></button>
            <button class="ib" aria-label="Fusión de fotogramas"><svg width="19" height="15"><path d="M0 4h4v11H0zM5 3h4v11H5zM10 1h8v10h-8z" fill="#aaa"/><path d="M2 4v11M7 3v11M12 1v10M16 1v10" stroke="#444" stroke-dasharray="2 1"/></svg></button>
            <button class="ib" aria-label="Desenfoque de movimiento"><svg width="17" height="15"><circle cx="5" cy="10" r="5" fill="#555"/><circle cx="8" cy="7.500" r="5" fill="#888" stroke="#333"/><circle cx="11.500" cy="5.500" r="5" fill="#b5b5b5" stroke="#444"/></svg></button>
            <button class="ib ms-2" aria-label="Ideas"><svg width="19" height="15"><circle cx="11" cy="6.500" r="6.500" fill="#bbb"/><circle cx="4" cy="11" r="3" fill="#bbb"/><path d="M8 5a3 3 0 0 1 6 0q0 2-2 4v2h-2V9Q8 7 8 5z" fill="#333"/><circle cx="11" cy="5" r="1.500" fill="#eee"/></svg></button>
            <button class="ib" aria-label="Autofotogramas clave"><svg width="15" height="16"><circle cx="8" cy="9.500" r="5.500" fill="#333" stroke="#bbb" stroke-width="2"/><path d="M6 0h4v3H6zM1 3l3 2M8 9V6" stroke="#bbb" stroke-width="1.500" fill="#bbb"/></svg></button>
            <button class="ib ms-1" aria-label="Editor de gráficos"><svg width="19" height="14"><path d="M0 2.500h19M0 10.500h19" stroke="#999"/><path d="M2 12V4q3-3 6 1t5 5q2 1 4-1M14 8l5 5M19 8v5h-5" stroke="#ccc" stroke-width="1.300" fill="none"/></svg></button>
          </div>
        </div>
        <table class="grid-t layers flex-shrink-0">
          <colgroup><col style="width:68px"><col style="width:32px"><col style="width:33px"><col style="width:19px"><col style="width:219px"><col style="width:88px"><col style="width:22px"><col style="width:87px"><col style="width:138px"><col></colgroup>
          <thead class="tiny"><tr><th><div class="d-flex align-items-center" style="gap:3px;padding-left:5px"><svg width="13" height="10"><use href="#eye"/></svg><svg width="14" height="11"><use href="#spk"/></svg><svg width="9" height="9"><circle cx="4.500" cy="4.500" r="4" fill="#aaa"/></svg><svg width="10" height="11" style="margin-left:3px"><path d="M2.500 5V3a2.500 2 0 0 1 5 0v2" stroke="#bbb" stroke-width="1.500" fill="none"/><path d="M1 5h8v6H1z" fill="#bbb"/><path d="M5 7v2" stroke="#222"/></svg></div></th><th class="b"><svg width="15" height="13" class="ms-2"><use href="#tag"/></svg></th><th class="b">#</th><th class="b" colspan="2" style="padding-left:6px">Nombre de origen</th><th class="b" style="padding-left:6px">Modo</th><th class="ps-2">T</th><th style="padding-left:4px">Mate seguim.</th><th class="b" style="padding-left:6px">Primario</th><th class="b"></th></tr></thead>
          <tbody><tr><td><div class="d-flex align-items-center" style="padding-left:5px;gap:2px"><svg width="13" height="10" style="margin-right:15px"><use href="#eye"/></svg><span class="slotbox"></span><span class="slotbox"></span></div></td>
          <td><div class="d-flex align-items-center" style="gap:8px;padding-left:6px"><svg width="6" height="9" color="#888"><use href="#rt"/></svg><span class="chip blue" style="width:11px"></span></div></td><td style="padding-left:7px"><b>1</b></td><td><svg width="10" height="10" style="margin-left:5px"><path d="M5 0l1.500 3.500H10L7 6l1 4-3-2-3 2 1-4-3-2.500h3.500z" fill="#fff"/></svg></td><td><div class="picked">Capa de formas 1</div></td>
          <td><select class="sel ms-1" style="width:84px;height:16px" aria-label="Modo"><option>Normal</option></select></td><td><div class="slotbox ms-1"></div></td><td></td>
          <td colspan="2"><div class="d-flex align-items-center" style="padding-left:6px"><svg width="12" height="12" style="margin-right:6px"><path d="M8 5a2 2 0 1 0-1 3q3 1 4-2a5 5 0 1 0-4 5" stroke="#bbb" stroke-width="1.500" fill="none"/></svg><select class="sel" style="width:108px;height:16px" aria-label="Primario"><option>Ninguno</option></select></div></td></tr></tbody>
        </table>
        <div class="flex-grow-1" style="background:#272727"></div>
        <div class="foot" style="height:18px;padding-left:6px;gap:6px">
          <svg width="13" height="13"><path d="M.5.5h7v7h-7zM2.500 2.500h7v7h-7zM4.500 4.500h8v8h-8z" fill="#333" stroke="#bbb"/><path d="M6 8l2 3 4-5" stroke="#ddd" fill="none"/></svg>
          <svg width="13" height="13"><circle cx="5" cy="5" r="4" fill="#222" stroke="#ccc" stroke-width="1.500"/><path d="M5.500 5.500h7v7h-7z" fill="#333" stroke="#bbb"/></svg>
          <svg width="11" height="12"><path d="M4 0Q1 0 2.500 4 3 6 0 6q3 0 2.500 2Q1 12 4 12M7 0q3 0 1.500 4Q8 6 11 6 8 6 8.500 8 10 12 7 12" stroke="#bbb" stroke-width="1.500" fill="none"/></svg>
          <button class="ib tiny" style="width:192px;height:15px;margin-left:313px;background:#2b2b2b;border:1px solid #000;color:var(--ink);font-size:10px">Conmutar definidores / modos</button>
        </div>
      </div>
      <div class="d-flex flex-column flex-grow-1" style="min-width:0">
        <div class="d-flex flex-grow-1" style="min-height:0">
          <div class="d-flex flex-column flex-grow-1 position-relative" style="padding-top:7px">
            <div class="nav-track flex-shrink-0"></div>
            <div class="ruler d-flex justify-content-between flex-shrink-0"><span>:00s</span><span>02s</span><span>04s</span><span>06s</span><span>08s</span><span>10s</span><span>12s</span><span>14s</span><span>16s</span><span>18s</span><span>20s</span></div>
            <div class="work flex-shrink-0"></div>
            <div class="lane bg-black"><div class="cache"></div></div>
            <div class="lane" style="border-top:1px solid #000"><div class="bar"></div></div>
            <div class="lane flex-grow-1" style="background:#2a2a2a"><div class="h-100" style="background:#343434"></div></div>
            <div class="playhead"><svg width="13" height="18"><path d="M1 5q0-3 3-3h5q3 0 3 3v4l-5.500 8L1 9z" fill="#d9a514"/><path d="M4.500 4v5M6.500 4v5M8.500 4v5" stroke="#7a5c00"/></svg></div>
          </div>
          <div class="d-flex flex-column align-items-center flex-shrink-0" style="width:18px;padding:38px 1px 0 0;border-left:1px solid #000">
            <svg width="12" height="14"><path d="M.5.5h11v8L6 13 .5 8.500z" fill="#999" stroke="#bbb"/></svg>
            <svg width="14" height="13" class="my-2"><circle cx="5" cy="5" r="4" fill="none" stroke="#bbb"/><path d="M8 3h5v7H8z" fill="#333" stroke="#bbb"/><path d="M0 13l5-8 5 8z" fill="#ccc"/></svg>
            <div class="sbar flex-grow-1 w-100" style="padding-top:0"><svg width="10" height="7"><use href="#up"/></svg><svg width="10" height="7"><use href="#down"/></svg></div>
          </div>
        </div>
        <div class="foot" style="height:18px;padding-left:7px">
          <svg width="10" height="5"><use href="#mtn"/></svg>
          <input type="range" class="zoomer" aria-label="Zoom de tiempo" value="0">
          <svg width="17" height="8" class="ms-1"><use href="#mtn"/></svg>
          <div class="d-flex align-items-center justify-content-between flex-grow-1 h-100" style="margin:0 18px 0 5px;padding:0 5px;background:#222;border-left:1px solid #000;border-right:1px solid #000;color:#555"><svg width="6" height="9"><use href="#lt"/></svg><svg width="6" height="9"><use href="#rt"/></svg></div>
        </div>
      </div>
    </div>
  </section>

  <section class="pane right flex-shrink-0">
    <div class="ptabs"><button class="ptab"><span class="grip"></span>Párrafo<svg width="6" height="6"><use href="#x"/></svg></button><button class="ptab off" style="width:63px;padding-left:11px">Alinear</button><div class="pend"><button class="ib" aria-label="Menú"><svg width="14" height="10"><use href="#menu"/></svg></button><span class="grip"></span></div></div>
    <div class="d-flex align-items-center al">
      <button class="ib pressed" aria-label="Izquierda"><svg width="14" height="14"><path d="M0 .5h14M0 2.500h9M0 4.500h14M0 6.500h9M0 8.500h14M0 10.500h9M0 12.500h14" stroke="#bbb"/></svg></button>
      <button class="ib" style="margin-left:5px" aria-label="Centro"><svg width="14" height="14"><path d="M0 .5h14M3 2.500h8M0 4.500h14M3 6.500h8M0 8.500h14M3 10.500h8M0 12.500h14" stroke="#bbb"/></svg></button>
      <button class="ib" style="margin-left:5px" aria-label="Derecha"><svg width="14" height="14"><path d="M0 .5h14M5 2.500h9M0 4.500h14M5 6.500h9M0 8.500h14M5 10.500h9M0 12.500h14" stroke="#bbb"/></svg></button>
      <button class="ib" style="margin-left:10px" aria-label="Justificar izquierda"><svg width="14" height="14"><path d="M0 .5h14M0 2.500h14M0 4.500h14M0 6.500h14M0 8.500h14M0 10.500h14M0 12.500h9" stroke="#bbb"/></svg></button>
      <button class="ib" style="margin-left:5px" aria-label="Justificar centro"><svg width="14" height="14"><path d="M0 .5h14M0 2.500h14M0 4.500h14M0 6.500h14M0 8.500h14M0 10.500h14M3 12.500h8" stroke="#bbb"/></svg></button>
      <button class="ib" style="margin-left:5px" aria-label="Justificar derecha"><svg width="14" height="14"><path d="M0 .5h14M0 2.500h14M0 4.500h14M0 6.500h14M0 8.500h14M0 10.500h14M5 12.500h9" stroke="#bbb"/></svg></button>
      <button class="ib" style="margin-left:10px" aria-label="Justificar todo"><svg width="14" height="14"><path d="M0 .5h14M0 2.500h14M0 4.500h14M0 6.500h14M0 8.500h14M0 10.500h14M0 12.500h14" stroke="#bbb"/></svg></button>
    </div>
    <div class="hr1" style="margin:4px 19px 2px 7px"></div>
    <div class="para">
      <div><svg width="18" height="12"><path d="M0 6.500h5M3 4l2 2.500L3 9M7 0v12M9 1.500h8M9 4.500h6M9 7.500h8M9 10.500h8" stroke="#bbb" fill="none"/></svg><a href="#" class="gold">337</a>px</div>
      <div><svg width="18" height="12"><path d="M7 2h11v4H7z" fill="#666"/><path d="M0 1.500h5M3 0l2 1.500L3 3M7 1.500h11M7 6.500h11M7 8.500h8M7 10.500h11" stroke="#bbb" fill="none"/></svg><a href="#" class="gold">81</a>px</div>
      <div><svg width="18" height="12"><path d="M0 1.500h7M5 0l2 1.500L5 3M10 1.500h8M8 4.500h10M8 6.500h8M8 8.500h10M8 10.500h8" stroke="#bbb" fill="none"/></svg><a href="#" class="gold">6</a>px</div>
      <div><svg width="18" height="12"><path d="M0 1.500h9M0 4.500h7M0 7.500h9M0 10.500h7M12 0v12M13 6.500h5M15 4l-2 2.500L15 9" stroke="#bbb" fill="none"/></svg><a href="#" class="gold">0</a>px</div>
      <div class="pt-1"><svg width="18" height="12"><path d="M7 7h11v4H7z" fill="#666"/><path d="M0 10.500h5M3 8.500l2 2-2 1.500M7 .5h11M7 2.500h8M7 4.500h11M7 7.500h11" stroke="#bbb" fill="none"/></svg><a href="#" class="gold">1</a>px</div>
    </div>
  </section>
</div>
</main>
</div>

<footer class="taskbar d-flex align-items-center">
  <button class="ib" style="width:59px" aria-label="Inicio"><svg width="38" height="38"><defs><radialGradient id="orb" cx=".5" cy=".85"><stop offset="0" stop-color="#4fd0f0"/><stop offset=".6" stop-color="#1a5f8f"/><stop offset="1" stop-color="#12304c"/></radialGradient></defs><circle cx="19" cy="19" r="18" fill="url(#orb)" stroke="#a9c3cc"/><path d="M10 12q4-3 8 0l-1 6q-4-2-8 0z" fill="#f0642a"/><path d="M19.500 12q4 3 8 0l-1.500 7q-4 2-8-.5z" fill="#8cc63f"/><path d="M9 20q4-2 8 0l-1.500 6q-4-2-7 0z" fill="#38a0e8"/><path d="M18 20q4 3 8 .5l-1.500 6q-4 2-8 0z" fill="#fbc524"/><path d="M4 13Q10 3 19 3t15 10q-15 4-30 0z" fill="#fff" opacity=".25"/></svg></button>
  <button class="ib slot" aria-label="Explorador"><span><svg width="34" height="30"><path d="M1 5h8l2-3h18l2 24H2z" fill="#e8cf7a"/><path d="M4 3h10v6H4z" fill="#fff"/><path d="M5 4h3v2H5z" fill="#2a4"/><path d="M14 5h10v4H14z" fill="#fff"/><path d="M15 6h3v2h-3z" fill="#d32"/><path d="M1 9h31l-2 18H3z" fill="#f6e39c"/><path d="M8 29V18h19v11h-5v-6h-9v6z" fill="#a6d4f2" stroke="#6aa8d4"/></svg></span></button>
  <button class="ib slot" aria-label="Camtasia"><span><svg width="32" height="32"><path d="M0 0h32v28l-6 4H0z" fill="#3e8a1c"/><path d="M0 0h32v14L0 26z" fill="#5cb030"/><path d="M23 8V5H13q-4 0-4 4v10q0 4 4 4h10v-4h-9q-1 0-1-1v-8q0-1 1-1h9z" fill="#fff"/></svg></span></button>
  <button class="ib slot" aria-label="Grabador"><span><svg width="32" height="32"><circle cx="16" cy="15" r="15" fill="#b9c0c4"/><path d="M16 15L6 4a15 15 0 0 1 12-4z" fill="#eef"/><circle cx="16" cy="13" r="3.500" fill="#666" stroke="#eee" stroke-width="2"/><path d="M2 19q3 2 4-3 3 6 5 1 2 5 5-1 2 5 5 0 3 4 8-3 0 14-13 17Q4 31 2 19z" fill="#c8640c"/><path d="M7 22q3 2 4-3 3 5 6-1 2 5 7 1-1 9-8 11-7-1-9-8z" fill="#f8b02c"/><path d="M10 26q3 1 4-3 2 3 5 0 2 6-4 7-4 0-5-4z" fill="#ffec9a"/></svg></span></button>
  <button class="ib slot" aria-label="Aplicación S"><span><svg width="34" height="32"><path d="M4 26Q8 0 17 1q12 2 15 29h-5Q24 16 17 15z" fill="#e8711c"/><path d="M28 30l4-1-6-13z" fill="#ddd"/><path d="M18 7q-8-3-9 2 0 3 5 4 5 1 4 5-2 5-11 1" stroke="#fff" stroke-width="3.500" fill="none"/><circle cx="3" cy="15" r="2" fill="#e8711c"/><circle cx="4" cy="27" r="3" fill="#e8711c"/></svg></span></button>
  <button class="ib slot" aria-label="Aplicación naranja"><span><svg width="34" height="32"><circle cx="17" cy="16" r="15" fill="#ee7b10" stroke="#ffc080"/><path d="M14 28L3 13l3-5zM15 27L8 6l4-3zM16.500 27L14 2h6l-2.500 25zM19 27l3-24 4 3zM20 28L28 8l3 5z" fill="#ffe9d2"/></svg></span></button>
  <button class="ib slot" aria-label="OpenOffice"><span><svg width="32" height="32"><circle cx="16" cy="16" r="15.500" fill="#0f87cc"/><path d="M12 8q4-1 6 2 3-4 10-2-6 0-9 5-3-4-7-5zM1 15q8-2 11 4 4-5 12-3-8 1-11 7Q9 16 1 15z" fill="#fff"/></svg></span></button>
  <button class="ib slot" aria-label="TeamViewer"><span><svg width="30" height="34"><path d="M2 3l20-3 5 3v29l-5 1L2 28z" fill="#1777d0"/><path d="M22 0l5 3v29l-5 1z" fill="#0b4d95"/><ellipse cx="12" cy="16" rx="9" ry="10" fill="#fff"/><path d="M4 16l5-4v2.500h6V12l5 4-5 4v-2.500H9V20z" fill="#1777d0"/></svg></span></button>
  <button class="ib slot open" aria-label="Chrome"><span><svg width="30" height="30"><circle cx="15" cy="15" r="14.500" fill="#f8cf2c"/><path d="M2.500 8a14.500 14.500 0 0 1 25 0H15a7 7 0 0 0-6.500 5z" fill="#dd4132"/><path d="M2.500 8l7 12q2.500 3 6 2L13 29.500A14.500 14.500 0 0 1 2.500 8z" fill="#36a852"/><circle cx="15" cy="15" r="6.800" fill="#fff"/><circle cx="15" cy="15" r="5.300" fill="#3b7ded"/></svg></span></button>
  <button class="ib slot" aria-label="Cinema 4D"><span><svg width="31" height="32"><circle cx="15" cy="16" r="14.500" fill="#dfe5ee"/><circle cx="14" cy="16" r="12.500" fill="#16275a"/><ellipse cx="17" cy="14" rx="7" ry="9" fill="#c9d6ee"/><circle cx="18" cy="17" r="6" fill="#0c1538"/></svg></span></button>
  <button class="ib slot" aria-label="3ds"><span><svg width="27" height="31"><rect width="26" height="31" rx="3" fill="#3a4348"/><path d="M20 7Q5 5 5 15t9 10q8 0 8-6t-7-6q-5 0-5 4 0 3 4 3 3 0 3-2" stroke="#f2f2f2" stroke-width="2.500" fill="none"/></svg></span></button>
  <button class="ib slot" aria-label="3ds Max"><span><svg width="32" height="32"><path d="M0 0h32v32H0z" fill="#d8e6ec"/><path d="M6 2h10l9 5v10l-9 6H6l5-6-4-4 4-5z" fill="#16a0a0"/><path d="M16 2l9 5v10l-9 6 3-11z" fill="#0a7078"/><path d="M6 2h10l3 10-8-4z" fill="#3cc4c0"/><text x="21" y="31" font-family="Liberation Sans" font-weight="700" font-size="8" fill="#333" text-anchor="middle">MAX</text></svg></span></button>
  <button class="ib slot" aria-label="Media Encoder"><span><svg width="28" height="26"><path d="M1 1h26v24H1z" fill="#a49ad6" stroke="#2a0f6b" stroke-width="2.500"/><path d="M6 5h2v2h2v2h2v2h2v2h2v2h2v2h2v2h2v2H6z" fill="#2a0f6b"/><path d="M10 5h2v2h-2zM12 7h2v2h-2zM14 9h2v2h-2zM16 11h2v2h-2zM18 13h2v2h-2zM20 15h2v2h-2z" fill="#2a0f6b"/></svg></span></button>
  <button class="ib slot front" aria-label="After Effects"><span><b class="appsq">Ae</b></span></button>
  <button class="ib slot open" aria-label="Photoshop"><span><b class="appsq ps">Ps</b></span></button>
  <span class="ms-auto">ES</span>
  <svg width="8" height="5" style="margin:5px 16px 0 14px"><path d="M0 5l4-5 4 5z" fill="#fff"/></svg>
  <svg width="15" height="15"><path d="M1 0v15" stroke="#fff" stroke-width="1.500"/><path d="M2 2q3-2 6 0t6 0L13 9q-3 1-5-1-3-2-6 0z" fill="#fff"/></svg>
  <svg width="15" height="15" style="margin:0 9px"><path d="M4.500 3.500h10v8h-10z" fill="#365840" stroke="#fff" stroke-width="1.500"/><path d="M6 14h8M2 0v4M0 4h4v3L2 9v5" stroke="#fff" stroke-width="1.500" fill="none"/></svg>
  <svg width="15" height="14" color="#fff"><use href="#spk"/></svg>
  <div class="text-center ms-2" style="width:81px">9:49<br>24/02/2015</div>
  <div class="peek"></div>
</footer>

<script src="https://cdn.jsdelivr.net/npm/bootstrap@5.3.0/dist/js/bootstrap.bundle.min.js"></script>
</body>
</html>
